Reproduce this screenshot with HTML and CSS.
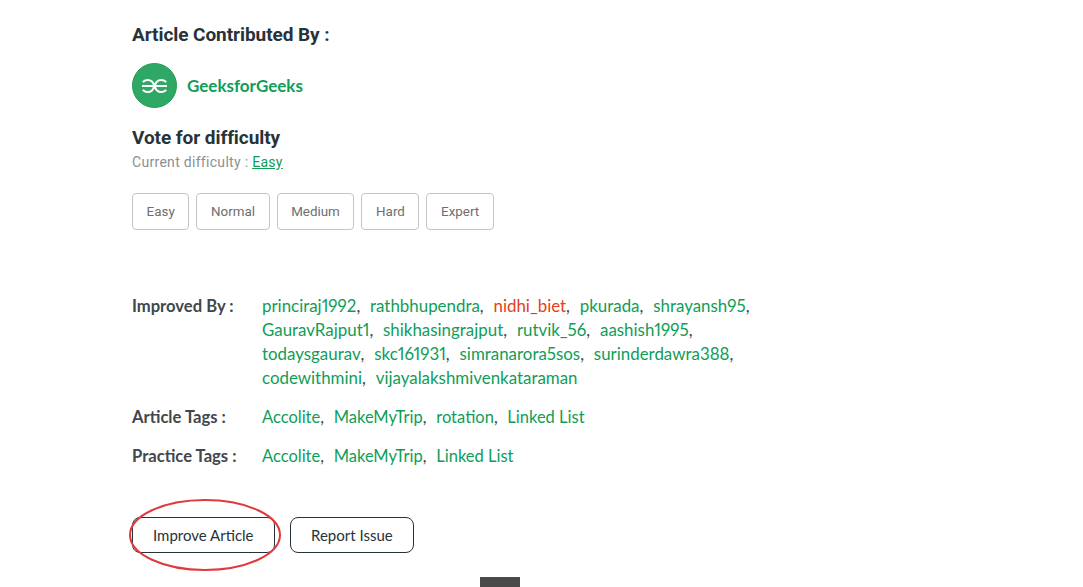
FILE: index.html
```html
<!DOCTYPE html>
<html lang="en">
<head>
  <meta charset="UTF-8" />
  <title>Article footer</title>
  <link rel="stylesheet" href="styles.css">
</head>
<body>
  <div class="article-footer">
    <h3 class="section-title">Article Contributed By :</h3>
    <div class="author">
      <svg class="author-logo" viewBox="0 0 45 45" aria-hidden="true">
        <circle cx="22.5" cy="22.5" r="22" fill="#2fa866" stroke="#1f9a55" stroke-width="1"/>
        <path d="M10 23h12.5M10.8 19.2a6.3 6 0 1 1 0 7.6M35 23h-12.5M34.2 19.2a6.3 6 0 1 0 0 7.6" fill="none" stroke="#fff" stroke-width="2"/>
      </svg>
      <a class="author-name" href="#">GeeksforGeeks</a>
    </div>

    <h3 class="vote-title">Vote for difficulty</h3>
    <p class="current">Current difficulty : <a href="#">Easy</a></p>
    <div class="levels">
      <button class="level">Easy</button>
      <button class="level">Normal</button>
      <button class="level">Medium</button>
      <button class="level">Hard</button>
      <button class="level">Expert</button>
    </div>

    <div class="meta-row improved">
      <div class="meta-label">Improved By :</div>
      <div class="meta-list">
        <a href="#">princiraj1992</a>, <a href="#">rathbhupendra</a>, <a class="hot" href="#">nidhi_biet</a>, <a href="#">pkurada</a>, <a href="#">shrayansh95</a>,<br>
        <a href="#">GauravRajput1</a>, <a href="#">shikhasingrajput</a>, <a href="#">rutvik_56</a>, <a href="#">aashish1995</a>,<br>
        <a href="#">todaysgaurav</a>, <a href="#">skc161931</a>, <a href="#">simranarora5sos</a>, <a href="#">surinderdawra388</a>,<br>
        <a href="#">codewithmini</a>, <a href="#">vijayalakshmivenkataraman</a>
      </div>
    </div>
    <div class="meta-row">
      <div class="meta-label">Article Tags :</div>
      <div class="meta-list">
        <a href="#">Accolite</a>, <a href="#">MakeMyTrip</a>, <a href="#">rotation</a>, <a href="#">Linked List</a>
      </div>
    </div>
    <div class="meta-row">
      <div class="meta-label">Practice Tags :</div>
      <div class="meta-list">
        <a href="#">Accolite</a>, <a href="#">MakeMyTrip</a>, <a href="#">Linked List</a>
      </div>
    </div>

    <div class="actions">
      <div class="improve-wrap">
        <button class="action improve">Improve Article</button>
        <svg class="circled" viewBox="0 0 154 74" aria-hidden="true">
          <ellipse cx="77" cy="36" rx="75" ry="35" fill="none" stroke="#e0393e" stroke-width="2"/>
        </svg>
      </div>
      <button class="action report">Report Issue</button>
    </div>
  </div>
  <div class="to-top"></div>
</body>
</html>
```

FILE: styles.css
```css
html, body {
  height: 100%;
}
body {
  margin: 0;
  background: #fff;
  color: #273239;
  font-family: Lato, 'Noto Sans', sans-serif;
  overflow: hidden;
  position: relative;
}
a {
  color: #0f9d58;
  text-decoration: none;
}
.article-footer {
  padding: 23px 0 0 132px;
  width: 700px;
}
.section-title, .vote-title {
  margin: 0;
  font-family: 'Roboto', sans-serif;
  font-weight: 700;
  font-size: 19px;
  line-height: 24px;
  letter-spacing: -0.06px;
}
.author {
  display: flex;
  align-items: center;
  gap: 10px;
  margin-top: 16px;
}
.author-logo {
  width: 45px;
  height: 45px;
}
.author-name {
  font-weight: 700;
  font-size: 17px;
}
.vote-title {
  margin-top: 18px;
}
.current {
  margin: 3px 0 0;
  font-family: 'Roboto', sans-serif;
  font-size: 14px;
  line-height: 18px;
  color: #8b8f93;
  letter-spacing: 0.3px;
}
.current a {
  text-decoration: underline;
}
.levels {
  display: flex;
  gap: 7px;
  margin-top: 22px;
}
.level {
  height: 37px;
  padding: 0 13.6px;
  background: #fff;
  border: 1px solid #c5c5c5;
  border-radius: 4px;
  font-family: 'Roboto', sans-serif;
  font-size: 13.4px;
  color: #6e6e6e;
}
.meta-row {
  display: flex;
  margin-top: 15px;
  font-size: 16.5px;
  line-height: 24px;
}
.improved {
  margin-top: 64px;
  font-size: 16.9px;
}
.meta-label {
  width: 130px;
  flex: none;
  font-size: 16.6px;
  font-weight: 700;
  color: #40474d;
}
.meta-list {
  color: #40474d;
  word-spacing: 5.5px;
  font-variant-numeric: proportional-nums;
}
.meta-list a {
  word-spacing: 0;
}
.meta-list .hot {
  color: #e2401b;
}
.actions {
  display: flex;
  gap: 15px;
  margin-top: 49px;
}
.improve-wrap {
  position: relative;
}
.action {
  display: block;
  height: 36px;
  padding: 0 20px;
  background: #fff;
  border: 1px solid #273239;
  border-radius: 8px;
  font-family: Lato, sans-serif;
  font-size: 15px;
  color: #273239;
}
.report {
  padding: 0 20.5px;
}
.circled {
  position: absolute;
  left: -4px;
  top: -18px;
  width: 154px;
  height: 74px;
  pointer-events: none;
}
.to-top {
  position: absolute;
  left: 480px;
  top: 577px;
  width: 40px;
  height: 10px;
  background: #4a4a4a;
}
```
